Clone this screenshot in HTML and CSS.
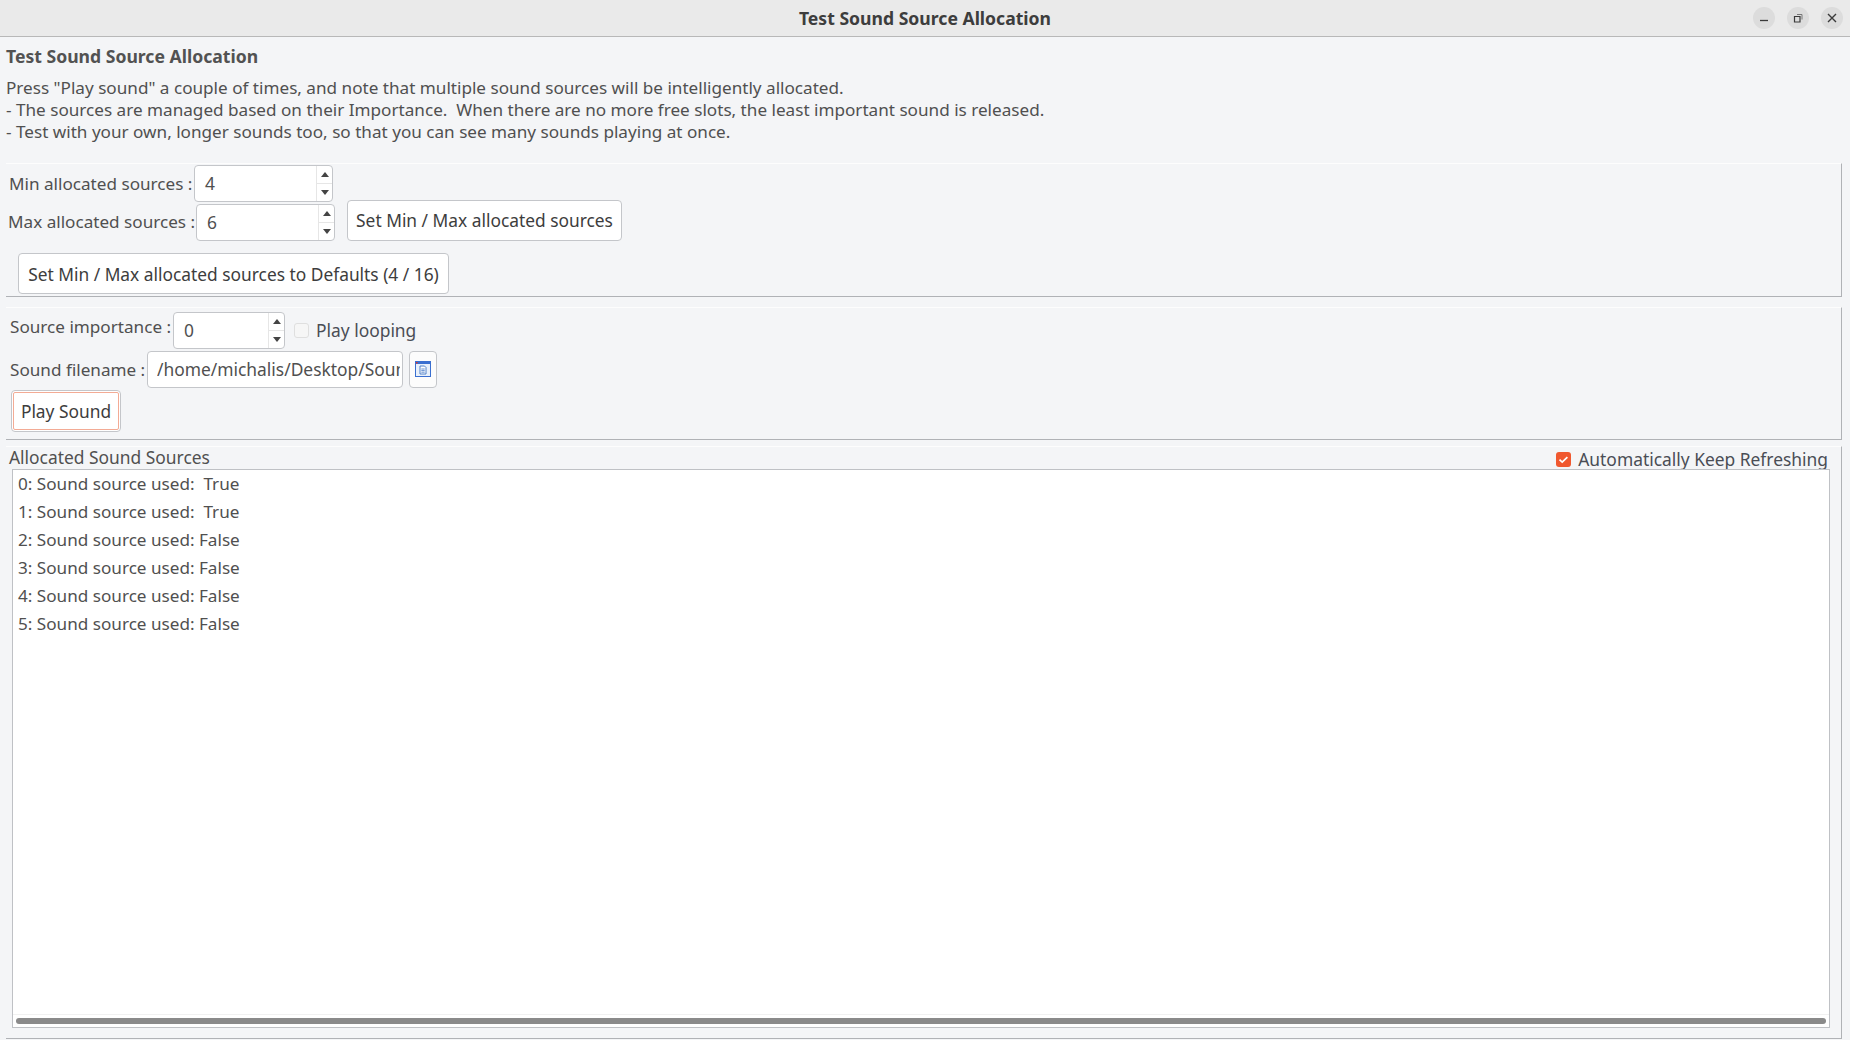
FILE: index.html
```html
<!DOCTYPE html>
<html lang="en">
<head>
<meta charset="utf-8">
<title>Test Sound Source Allocation</title>
<link rel="stylesheet" href="styles.css">
</head>
<body>
<div class="window">
  <header class="titlebar">
    <div class="title">Test Sound Source Allocation</div>
    <div class="winbtns">
      <span class="winbtn"><svg width="22" height="22" viewBox="0 0 22 22"><path d="M7 13.500h8" stroke="#3a3a3a" stroke-width="1.300" fill="none"/></svg></span>
      <span class="winbtn"><svg width="22" height="22" viewBox="0 0 22 22"><path d="M7.500 9.500h5.500v5.500h-5.500z" stroke="#3a3a3a" stroke-width="1.200" fill="none"/><path d="M10 7.500h5v5" stroke="#777" stroke-width="1" fill="none"/></svg></span>
      <span class="winbtn"><svg width="22" height="22" viewBox="0 0 22 22"><path d="M7 7l8 8M15 7l-8 8" stroke="#3a3a3a" stroke-width="1.400" fill="none"/></svg></span>
    </div>
  </header>
  <main class="content">
    <h1 class="heading">Test Sound Source Allocation</h1>
    <div class="desc">
      <div>Press "Play sound" a couple of times, and note that multiple sound sources will be intelligently allocated.</div>
      <div>- The sources are managed based on their Importance.&nbsp; When there are no more free slots, the least important sound is released.</div>
      <div>- Test with your own, longer sounds too, so that you can see many sounds playing at once.</div>
    </div>

    <section class="group group-limits">
      <div class="limits-top">
        <div class="limits-col">
          <div class="row row-min">
            <span class="label label-min">Min allocated sources :</span>
            <div class="spin spin-limit"><span class="spin-value">4</span><div class="spin-arrows"><span class="arrow-cell"><i class="up"></i></span><span class="arrow-cell"><i class="down"></i></span></div></div>
          </div>
          <div class="row row-max">
            <span class="label label-max">Max allocated sources :</span>
            <div class="spin spin-limit"><span class="spin-value">6</span><div class="spin-arrows"><span class="arrow-cell"><i class="up"></i></span><span class="arrow-cell"><i class="down"></i></span></div></div>
          </div>
        </div>
        <button class="btn btn-set">Set Min / Max allocated sources</button>
      </div>
      <button class="btn btn-defaults">Set Min / Max allocated sources to Defaults (4 / 16)</button>
    </section>

    <section class="group group-play">
      <div class="row row-importance">
        <span class="label label-importance">Source importance :</span>
        <div class="spin spin-importance"><span class="spin-value">0</span><div class="spin-arrows"><span class="arrow-cell"><i class="up"></i></span><span class="arrow-cell"><i class="down"></i></span></div></div>
        <span class="check"></span>
        <span class="check-text">Play looping</span>
      </div>
      <div class="row row-file">
        <span class="label label-file">Sound filename :</span>
        <div class="file-input"><span class="file-text">/home/michalis/Desktop/Sound</span></div>
        <button class="browse" aria-label="Browse">
          <svg width="16" height="16" viewBox="0 0 16 16"><rect x="0.500" y="0.500" width="15" height="15" fill="#3a6fd0" stroke="#3a6fd0"/><rect x="1" y="3" width="14" height="12" fill="#e8f0fb"/><rect x="1" y="1" width="1.500" height="1.500" fill="#e2352a"/><path d="M5 5h4.500l1.500 1.500V13H5z" fill="#fff" stroke="#3f74c4" stroke-width="0.900"/><path d="M6.300 8h3.400M6.300 9.600h3.400M6.300 11.200h3.400" stroke="#3f74c4" stroke-width="0.800"/></svg>
        </button>
      </div>
      <button class="btn btn-play"><span class="btn-play-inner">Play Sound</span></button>
    </section>

    <section class="group group-list">
      <div class="list-head">
        <span class="label label-list">Allocated Sound Sources</span>
        <span class="auto">
          <span class="check-on"><svg width="15" height="15" viewBox="0 0 15 15"><path d="M3.500 7.700l2.700 2.500 5.200-5" stroke="#fff" stroke-width="1.700" fill="none"/></svg></span>
          <span class="auto-text">Automatically Keep Refreshing</span>
        </span>
      </div>
      <div class="list">
        <div class="items">
          <div class="item">0: Sound source used:&nbsp; True</div>
          <div class="item">1: Sound source used:&nbsp; True</div>
          <div class="item">2: Sound source used: False</div>
          <div class="item">3: Sound source used: False</div>
          <div class="item">4: Sound source used: False</div>
          <div class="item">5: Sound source used: False</div>
        </div>
        <div class="scrolltrack"><div class="scrollthumb"></div></div>
      </div>
    </section>
  </main>
</div>
</body>
</html>
```

FILE: styles.css
```css
* { box-sizing: border-box; }
html, body { margin: 0; padding: 0; }
body {
  width: 1850px;
  height: 1040px;
  overflow: hidden;
  background: #f4f5f7;
  font-family: "Noto Sans", sans-serif;
  font-size: 17.14px;
  color: #505050;
}
.window { display: flex; flex-direction: column; height: 1040px; }

.titlebar {
  height: 37px;
  flex: none;
  background: #eaeaea;
  border-bottom: 1px solid #b8b8b8;
  display: flex;
  align-items: center;
  justify-content: center;
  position: relative;
}
.title { font-weight: 700; font-size: 17.6px; color: #3d3d3d; }
.winbtns { position: absolute; right: 7px; top: 7px; display: flex; gap: 12px; }
.winbtn { width: 22px; height: 22px; border-radius: 50%; background: #dcdcdc; display: block; }
.winbtn svg { display: block; }

.content { flex: 1; display: flex; flex-direction: column; padding: 0 8px 0 6px; min-height: 0; }
.heading { margin: 8px 0 10px; font-size: 17.6px; line-height: 22px; font-weight: 700; color: #525252; }
.desc { line-height: 22px; height: 66px; }
.desc div { white-space: pre; }

.group {
  border-top: 1px solid #fdfdfd;
  border-right: 1px solid #b0b2b6;
  border-bottom: 1px solid #b0b2b6;
  flex: none;
}
.group-limits { margin-top: 20px; height: 134px; padding: 1px 0 0 2px; }
.group-play { margin-top: 10px; height: 133px; padding: 4px 0 0 4px; }
.group-list { margin-top: 6px; flex: 1; display: flex; flex-direction: column; padding: 0 11px 10px 6px; margin-bottom: 1px; }

.row { display: flex; align-items: center; }
.label { white-space: nowrap; }
.limits-top { display: flex; align-items: flex-end; }
.limits-col { display: flex; flex-direction: column; gap: 2px; }
.row-min { padding-left: 1px; }
.label-min { width: 185px; margin-top: -1px; }
.label-max { width: 188px; margin-top: -2px; }
.label-importance { width: 163px; margin-top: -8px; }
.label-file { width: 137px; margin-top: -1px; }

.spin {
  height: 37px;
  background: #fff;
  border: 1px solid #c4c6ca;
  border-radius: 4px;
  display: flex;
  justify-content: space-between;
}
.spin-limit { width: 139px; }
.spin-importance { width: 112px; }
.spin-value { padding-left: 10px; line-height: 35px; font-size: 17.4px; }
.spin-arrows { width: 16px; border-left: 1px solid #e6e6e6; display: flex; flex-direction: column; }
.arrow-cell { flex: 1; display: flex; align-items: center; justify-content: center; }
.arrow-cell + .arrow-cell { border-top: 1px solid #e6e6e6; }
.up, .down { display: block; width: 0; height: 0; border-left: 4px solid transparent; border-right: 4px solid transparent; }
.up { border-bottom: 5px solid #444; }
.down { border-top: 5px solid #444; }

.btn {
  font: inherit;
  font-size: 17.35px;
  color: #3d3d3d;
  background: #fff;
  border: 1px solid #c4c6ca;
  border-radius: 4px;
  padding: 0;
  white-space: nowrap;
}
.btn-set { width: 275px; height: 41px; margin-left: 12px; padding-bottom: 2px; }
.btn-defaults { display: block; width: 431px; height: 41px; margin: 12px 0 0 10px; }
.btn-play { display: block; width: 110px; height: 42px; margin: 2px 0 0 1px; padding: 1px; background: #fff; }
.btn-play-inner { display: flex; align-items: center; justify-content: center; height: 100%; border: 1px solid #f3ab95; border-radius: 2px; }

.check { width: 15px; height: 15px; margin-left: 9px; border: 1px solid #dfdfdf; border-radius: 3px; background: #f6f6f6; }
.check-text { margin: -2px 0 0 7px; color: #4a4d55; font-size: 17.4px; }
.row-file { margin-top: 2px; }
.file-input {
  width: 256px;
  height: 37px;
  background: #fff;
  border: 1px solid #c4c6ca;
  border-radius: 4px;
  padding: 0 2px 0 9px;
  line-height: 35px;
  font-size: 17.4px;
}
.file-text { display: block; overflow: hidden; white-space: nowrap; }
.browse {
  width: 28px;
  height: 37px;
  margin-left: 6px;
  padding: 0 0 1px;
  background: #fcfcfc;
  border: 1px solid #c4c6ca;
  border-radius: 4px;
  display: flex;
  align-items: center;
  justify-content: center;
}

.list-head { height: 22px; flex: none; display: flex; justify-content: space-between; align-items: center; line-height: 22px; font-size: 17.4px; }
.label-list { margin: -2px 0 0 -3px; }
.auto { display: flex; align-items: center; margin-top: 2px; margin-right: 2px; }
.check-on { width: 15px; height: 15px; border-radius: 3px; background: #f0582f; display: block; }
.check-on svg { display: block; }
.auto-text { margin-left: 7px; color: #4a4d55; }

.list {
  flex: 1;
  min-height: 0;
  background: #fff;
  border: 1px solid #bfc1c5;
  display: flex;
  flex-direction: column;
  justify-content: space-between;
}
.items { padding: 0 0 0 5px; }
.item { height: 28px; line-height: 28px; white-space: pre; }
.scrolltrack { height: 13px; border-top: 1px solid #f1f1f1; padding: 3px 3px 0 3px; }
.scrollthumb { height: 6px; background: #8a8a8a; border-radius: 3px; }
```
